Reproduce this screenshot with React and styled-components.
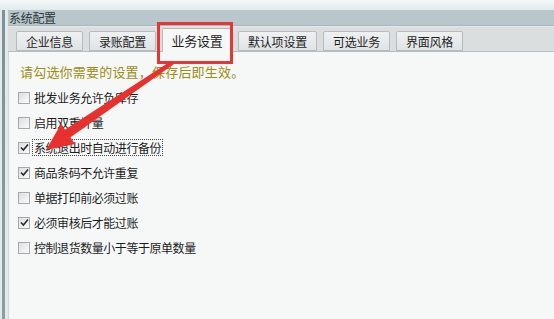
import React from 'react'
import styled, { createGlobalStyle } from 'styled-components'

const Global = createGlobalStyle`
  html, body {
    margin: 0;
    padding: 0;
    width: 554px;
    height: 319px;
    overflow: hidden;
    background: #f6f8f8;
  }
  * { box-sizing: border-box; }
`

const Window = styled.div`
  position: relative;
  width: 554px;
  height: 319px;
  display: flex;
  flex-direction: column;
  font-family: "Noto Sans CJK SC", "Noto Sans", sans-serif;
  font-size: 12px;
  color: #222;
`

const TopGlow = styled.div`
  height: 10px;
  background: linear-gradient(#f4f8f8, #e2eaec);
`

const Body = styled.div`
  flex: 1;
  display: flex;
`

const LeftEdge = styled.div`
  width: 8px;
  display: flex;
  background: #e4e9ea;
  &::before {
    content: '';
    width: 3px;
    margin-left: 2px;
    background: linear-gradient(#7e9196, #8d9ea3);
  }
`

const Main = styled.div`
  flex: 1;
  display: flex;
  flex-direction: column;
`

const TitleBar = styled.div`
  height: 16px;
  line-height: 15px;
  padding-left: 1px;
  background: #b9c6cb;
  border-bottom: 1px solid #a9b7bc;
  color: #2d383c;
  font-size: 12px;
  letter-spacing: -0.3px;
`

const TabStrip = styled.div`
  height: 26px;
  display: flex;
  align-items: flex-end;
  gap: 6px;
  padding-left: 8px;
  background: #dadedf;
  border-top: 1px solid #e6eaeb;
  border-bottom: 1px solid #b4bcbf;
`

const Tab = styled.div`
  position: relative;
  width: ${p => p.$w || 67}px;
  height: ${p => (p.$active ? 24 : 20)}px;
  margin-bottom: ${p => (p.$active ? -1 : 0)}px;
  display: flex;
  align-items: center;
  justify-content: center;
  font-size: ${p => (p.$active ? 13 : 12)}px;
  letter-spacing: -0.2px;
  color: #1f1f1f;
  background: ${p => (p.$active ? '#f6f8f8' : 'linear-gradient(#eff1f1, #e0e3e4)')};
  border: 1px solid #b4bcbf;
  border-bottom: ${p => (p.$active ? 'none' : '1px solid #b4bcbf')};
  border-radius: 2px 2px 0 0;
`

const Panel = styled.div`
  flex: 1;
  display: flex;
  flex-direction: column;
  padding: 11px 0 0 9px;
  background: #f6f8f8;
  border-left: 1px solid #cfd6d8;
`

const Hint = styled.div`
  height: 18px;
  line-height: 18px;
  margin: 0 0 4px 2px;
  font-size: 13px;
  letter-spacing: 0.2px;
  color: #9a8f12;
`

const Row = styled.label`
  height: 25px;
  display: flex;
  align-items: center;
  gap: 3px;
  font-size: 12px;
  letter-spacing: -0.45px;
  color: #1c1c1c;
`

const Box = styled.span`
  width: 12px;
  height: 12px;
  display: flex;
  align-items: center;
  justify-content: center;
  border: 1px solid #a3abaf;
  background: linear-gradient(135deg, #dcdfe0, #fbfbfb);
`

const Text = styled.span`
  padding: 0 1px;
  line-height: 15px;
  outline: ${p => (p.$focus ? '1px dotted #444' : 'none')};
`

const Frame = styled.div`
  position: absolute;
  left: 157px;
  top: 22px;
  width: 76px;
  height: 42px;
  border: 3px solid #e53535;
  pointer-events: none;
`

const Overlay = styled.svg`
  position: absolute;
  left: 0;
  top: 0;
  pointer-events: none;
`

const tabs = [
  { label: '企业信息' },
  { label: '录账配置' },
  { label: '业务设置', active: true, w: 70 },
  { label: '默认项设置', w: 79 },
  { label: '可选业务' },
  { label: '界面风格' },
]

const options = [
  { label: '批发业务允许负库存', checked: false },
  { label: '启用双重计量', checked: false },
  { label: '系统退出时自动进行备份', checked: true, focus: true },
  { label: '商品条码不允许重复', checked: true },
  { label: '单据打印前必须过账', checked: false },
  { label: '必须审核后才能过账', checked: true },
  { label: '控制退货数量小于等于原单数量', checked: false },
]

function Check({ checked }) {
  return (
    <Box>
      {checked && (
        <svg width="9" height="9" viewBox="0 0 9 9">
          <path d="M1 4.5 L3.4 7 L8 1.5" fill="none" stroke="#2b2b2b" strokeWidth="1.6" />
        </svg>
      )}
    </Box>
  )
}

export default function App() {
  return (
    <>
      <Global />
      <Window>
        <TopGlow />
        <Body>
          <LeftEdge />
          <Main>
            <TitleBar>系统配置</TitleBar>
            <TabStrip>
              {tabs.map(t => (
                <Tab key={t.label} $active={t.active} $w={t.w}>{t.label}</Tab>
              ))}
            </TabStrip>
            <Panel>
              <Hint>请勾选你需要的设置，保存后即生效。</Hint>
              {options.map(o => (
                <Row key={o.label}>
                  <Check checked={o.checked} />
                  <Text $focus={o.focus}>{o.label}</Text>
                </Row>
              ))}
            </Panel>
          </Main>
        </Body>
        <Frame />
        <Overlay width="554" height="319">
          <polygon points="171,61 174,64 68,139 63,131" fill="#e8302e" />
          <polygon points="46,150 61,124 75,144" fill="#e8302e" />
        </Overlay>
      </Window>
    </>
  )
}
